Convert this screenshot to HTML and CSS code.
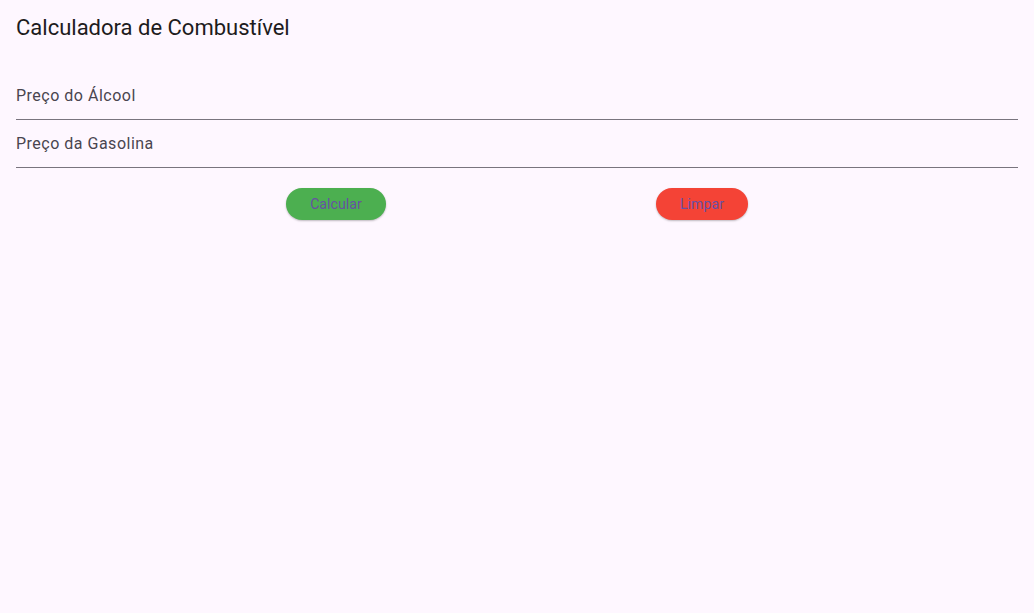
FILE: index.html
```html
<!DOCTYPE html>
<html lang="pt">
<head>
<meta charset="utf-8">
<title>Calculadora de Combustível</title>
<link rel="stylesheet" href="styles.css">
</head>
<body>
<header class="appbar">
  <h1 class="title">Calculadora de Combustível</h1>
</header>
<main class="content">
  <div class="field"><span class="label">Preço do Álcool</span></div>
  <div class="field"><span class="label">Preço da Gasolina</span></div>
  <div class="actions">
    <button class="btn btn-green">Calcular</button>
    <button class="btn btn-red">Limpar</button>
  </div>
</main>
</body>
</html>
```
FILE: styles.css
```css
html, body {
  margin: 0;
  padding: 0;
  background: #fef7ff;
  font-family: Roboto, "Noto Sans", sans-serif;
  width: 1034px;
  height: 613px;
  overflow: hidden;
}
.appbar {
  height: 54px;
  display: flex;
  align-items: center;
  padding: 0 16px;
}
.title {
  margin: 0;
  font-size: 22px;
  font-weight: 400;
  color: #1d1b20;
  letter-spacing: 0;
}
.content {
  padding: 18px 16px 0;
}
.field {
  height: 47px;
  border-bottom: 1px solid #79747e;
  display: flex;
  align-items: center;
  box-sizing: content-box;
}
.label {
  font-size: 16px;
  color: #49454f;
  letter-spacing: 0.5px;
}
.actions {
  display: flex;
  justify-content: space-evenly;
  margin-top: 20px;
}
.btn {
  height: 32px;
  border: none;
  border-radius: 16px;
  font-family: Roboto, "Noto Sans", sans-serif;
  font-size: 14px;
  color: #6750a4;
  letter-spacing: 0.1px;
  padding: 0;
  box-shadow: 0 1px 2px rgba(0,0,0,0.25);
}
.btn-green { background: #4caf50; width: 100px; }
.btn-red { background: #f44336; width: 92px; }
```
